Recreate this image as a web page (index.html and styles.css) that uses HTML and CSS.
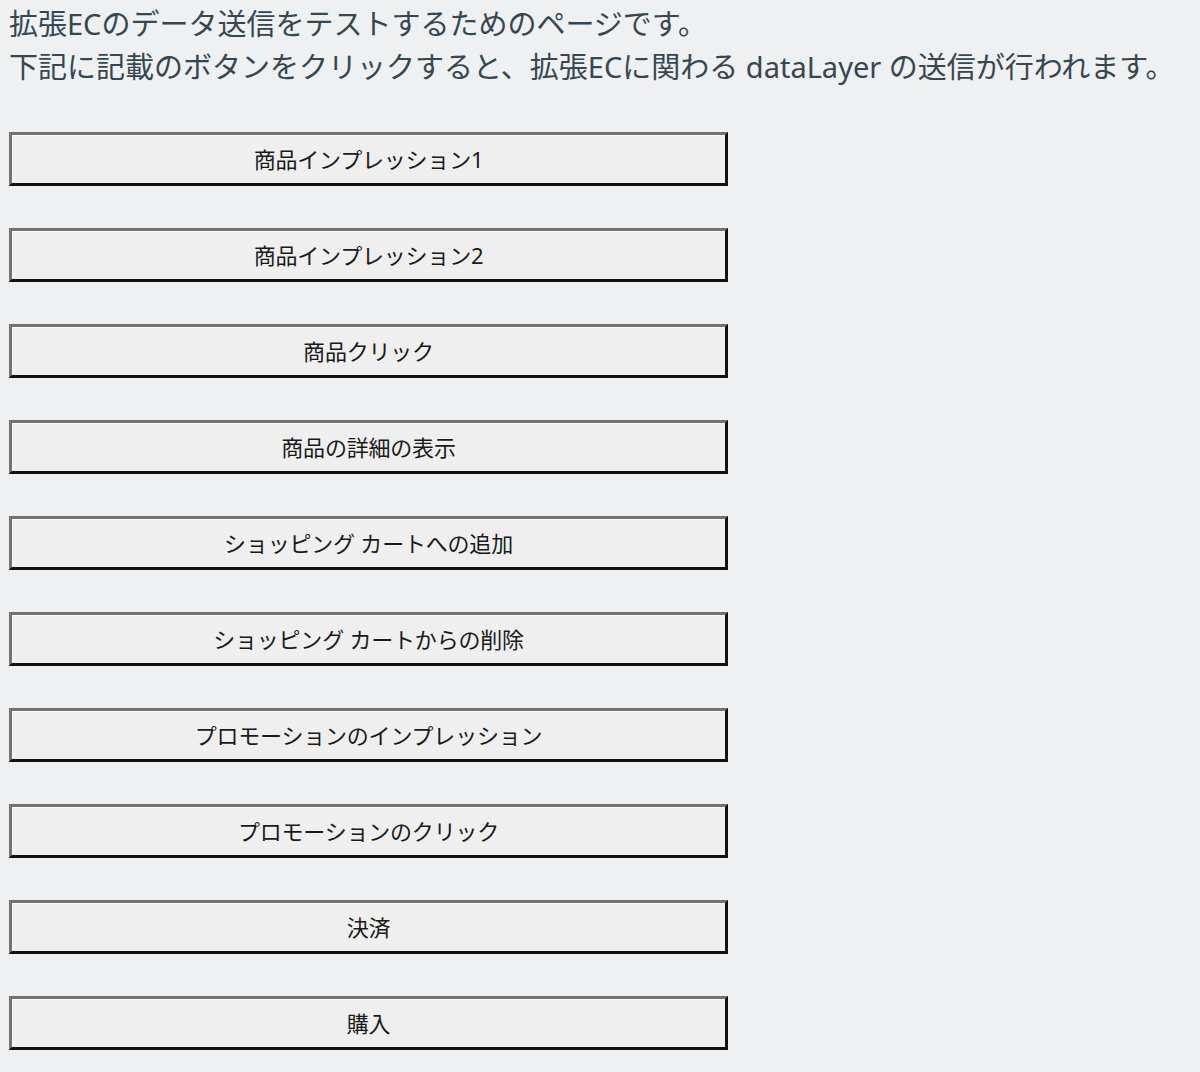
FILE: index.html
```html
<!DOCTYPE html>
<html lang="ja">
<head>
  <meta charset="UTF-8">
  <meta name="viewport" content="width=device-width, initial-scale=1.0">
  <link rel="stylesheet" href="styles.css">
  <title>拡張EC テスト</title>
</head>
<body>
  <div class="intro">
    <p>拡張ECのデータ送信をテストするためのページです。</p>
    <p>下記に記載のボタンをクリックすると、拡張ECに関わる dataLayer の送信が行われます。</p>
  </div>

  <div class="buttons">
    <button class="ecBtn" id="impression1">商品インプレッション1</button>
    <button class="ecBtn" id="impression2">商品インプレッション2</button>
    <button class="ecBtn" id="productClick">商品クリック</button>
    <button class="ecBtn" id="detail">商品の詳細の表示</button>
    <button class="ecBtn" id="addToCart">ショッピング カートへの追加</button>
    <button class="ecBtn" id="removeFromCart">ショッピング カートからの削除</button>
    <button class="ecBtn" id="promoView">プロモーションのインプレッション</button>
    <button class="ecBtn" id="promoClick">プロモーションのクリック</button>
    <button class="ecBtn" id="checkout">決済</button>
    <button class="ecBtn" id="purchase">購入</button>
  </div>
</body>
</html>
```

FILE: styles.css
```css
body{
  margin: 0;
  padding: 0 9px;
  background-color: #eef0f2;
  color: #37474f;
  font-family: "Noto Sans", "Noto Sans CJK JP", sans-serif;
}
.intro{
  padding-top: 2px;
}
.intro p{
  margin: 0;
  font-size: 29px;
  line-height: 43px;
}
.buttons{
  display: flex;
  flex-direction: column;
  gap: 42px;
  margin-top: 44px;
}
.ecBtn{
  width: 719px;
  height: 54px;
  padding: 0 0 3px;
  background-color: #efefef;
  border-style: solid;
  border-width: 3px;
  border-color: #727272 #111111 #111111 #727272;
  box-shadow: inset 1px 1px 0 #fafafa;
  color: #1a1a1a;
  font-family: "Noto Sans", "Noto Sans CJK JP", sans-serif;
  font-size: 22px;
  letter-spacing: -0.2px;
  text-align: center;
}
```
